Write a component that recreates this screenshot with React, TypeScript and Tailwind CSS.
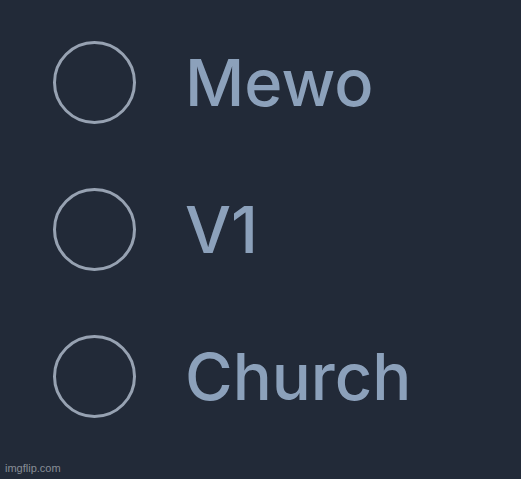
import React from 'react';

const options = ['Mewo', 'V1', 'Church'];

const App: React.FC = () => {
  return (
    <div className="relative w-[521px] h-[479px] bg-[#222a38] overflow-hidden font-['Inter','Liberation_Sans',sans-serif]">
      <div className="flex flex-col gap-[64px] pt-[41px] pl-[53px]">
        {options.map((label) => (
          <label key={label} className="flex items-center h-[83px] gap-[49px]">
            <span className="w-[83px] h-[83px] rounded-full border-[3px] border-[#97a2b2] shrink-0" />
            <span className="text-[65px] font-medium leading-none text-[#8ca1bb] -mt-[1px]">{label}</span>
          </label>
        ))}
      </div>
      <span className="absolute left-[5px] bottom-[5px] text-[11px] leading-none text-[#878d96] font-['Liberation_Sans',Arial,sans-serif]">
        imgflip.com
      </span>
    </div>
  );
};

export default App;
